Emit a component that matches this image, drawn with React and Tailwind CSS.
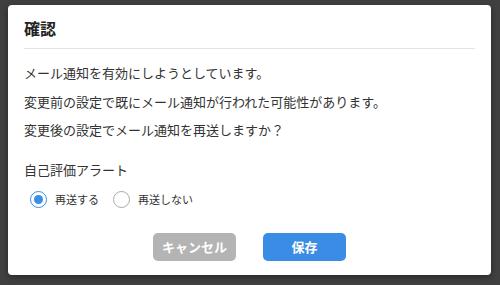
import { useState } from 'react'

const font = { fontFamily: '"Noto Sans CJK JP", "Noto Sans", sans-serif' }

function Radio({ checked, label, onClick }) {
  return (
    <label className="flex items-center gap-[8px] cursor-pointer" onClick={onClick}>
      <span
        className={[
          'flex h-[17px] w-[17px] items-center justify-center rounded-full border-[1.5px] bg-white',
          checked ? 'border-[#3b8ee5]' : 'border-[#a8a8a8]',
        ].join(' ')}
      >
        {checked ? <span className="h-[9px] w-[9px] rounded-full bg-[#3b8ee5]" /> : null}
      </span>
      <span className="text-[11px] text-[#333]">{label}</span>
    </label>
  )
}

export default function App() {
  const [resend, setResend] = useState(true)

  return (
    <div className="h-[285px] w-[500px] overflow-hidden bg-[#404040] px-[8px] pt-[5px]" style={font}>
      <div className="flex h-[270px] w-[483px] flex-col rounded-[4px] bg-white px-[16px] pt-[11px] shadow-[0_2px_6px_rgba(0,0,0,0.4)]">
        <h2 className="text-[16px] font-bold leading-[24px] text-[#222]">確認</h2>
        <div className="mt-[8px] h-px bg-[#e4e4e4]" />

        <div className="mt-[14px] flex flex-col gap-[9.5px] text-[13px] leading-[19px] text-[#333]">
          <p>メール通知を有効にしようとしています。</p>
          <p>変更前の設定で既にメール通知が行われた可能性があります。</p>
          <p>変更後の設定でメール通知を再送しますか？</p>
        </div>

        <p className="mt-[21px] text-[13px] leading-[19px] text-[#333]">自己評価アラート</p>
        <div className="mt-[12px] flex items-center gap-[14px] pl-[6px]">
          <Radio checked={resend} label="再送する" onClick={() => setResend(true)} />
          <Radio checked={!resend} label="再送しない" onClick={() => setResend(false)} />
        </div>

        <div className="mt-[25px] flex justify-center gap-[27px]">
          <button
            type="button"
            className="h-[28px] w-[83px] rounded-[5px] bg-[#b4b4b4] text-[13px] font-bold text-white"
          >
            キャンセル
          </button>
          <button
            type="button"
            className="h-[28px] w-[83px] rounded-[5px] bg-[#3a8ce4] text-[13px] font-bold text-white"
          >
            保存
          </button>
        </div>
      </div>
    </div>
  )
}
